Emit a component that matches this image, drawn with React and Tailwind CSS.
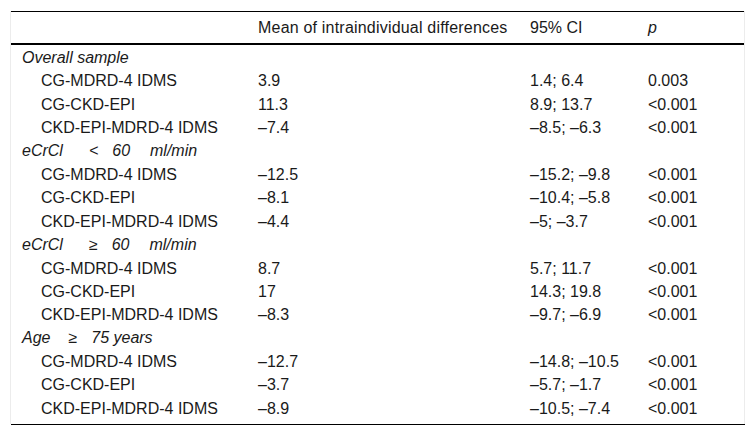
const sections = [
  {
    label: ["Overall sample"],
    rows: [
      ["CG-MDRD-4 IDMS", "3.9", "1.4; 6.4", "0.003"],
      ["CG-CKD-EPI", "11.3", "8.9; 13.7", "<0.001"],
      ["CKD-EPI-MDRD-4 IDMS", "\u20137.4", "\u20138.5; \u20136.3", "<0.001"],
    ],
  },
  {
    label: ["eCrCl", "<", "60", "ml/min"],
    rows: [
      ["CG-MDRD-4 IDMS", "\u201312.5", "\u201315.2; \u20139.8", "<0.001"],
      ["CG-CKD-EPI", "\u20138.1", "\u201310.4; \u20135.8", "<0.001"],
      ["CKD-EPI-MDRD-4 IDMS", "\u20134.4", "\u20135; \u20133.7", "<0.001"],
    ],
  },
  {
    label: ["eCrCl", "\u2265", "60", "ml/min"],
    rows: [
      ["CG-MDRD-4 IDMS", "8.7", "5.7; 11.7", "<0.001"],
      ["CG-CKD-EPI", "17", "14.3; 19.8", "<0.001"],
      ["CKD-EPI-MDRD-4 IDMS", "\u20138.3", "\u20139.7; \u20136.9", "<0.001"],
    ],
  },
  {
    label: ["Age", "\u2265", "75 years"],
    rows: [
      ["CG-MDRD-4 IDMS", "\u201312.7", "\u201314.8; \u201310.5", "<0.001"],
      ["CG-CKD-EPI", "\u20133.7", "\u20135.7; \u20131.7", "<0.001"],
      ["CKD-EPI-MDRD-4 IDMS", "\u20138.9", "\u201310.5; \u20137.4", "<0.001"],
    ],
  },
];

const Label = ({ parts }) => {
  if (parts.length === 1) return <span>{parts[0]}</span>;
  if (parts.length === 3)
    return (
      <>
        <span>{parts[0]}</span>
        <span className="ml-[18px]">{parts[1]}</span>
        <span className="ml-[14px]">{parts[2]}</span>
      </>
    );
  return (
    <>
      <span>{parts[0]}</span>
      <span className="ml-[26px]">{parts[1]}</span>
      <span className="ml-[14px]">{parts[2]}</span>
      <span className="ml-[20px]">{parts[3]}</span>
    </>
  );
};

const Row = ({ cells }) => (
  <div className="grid grid-cols-[247px_272px_118px_1fr] h-[23.4px] items-center">
    <div className="pl-[30px]">{cells[0]}</div>
    <div>{cells[1]}</div>
    <div>{cells[2]}</div>
    <div>{cells[3]}</div>
  </div>
);

export default function App() {
  return (
    <div className="w-[756px] h-[436px] bg-white pt-[11px] pl-[10px] font-['Liberation_Sans',Arial,sans-serif] text-[16px] text-[#1a1a1a]">
      <div className="w-[735px] border-x border-[#ececec] pb-[4px]">
        <div className="border-t border-black grid grid-cols-[247px_272px_118px_1fr] h-[32px] items-center">
          <div></div>
          <div className="tracking-[0.2px]">Mean of intraindividual differences</div>
          <div>95% CI</div>
          <div className="italic">p</div>
        </div>
        <div className="border-t-2 border-black pt-[1px]">
          {sections.map((s) => (
            <div key={s.label.join("")}>
              <div className="h-[23.4px] flex items-center pl-[11px] italic whitespace-pre">
                <Label parts={s.label} />
              </div>
              {s.rows.map((r) => (
                <Row key={r[0]} cells={r} />
              ))}
            </div>
          ))}
        </div>
      </div>
      <div className="ml-[1px] w-[734px] border-t border-black"></div>
    </div>
  );
}
